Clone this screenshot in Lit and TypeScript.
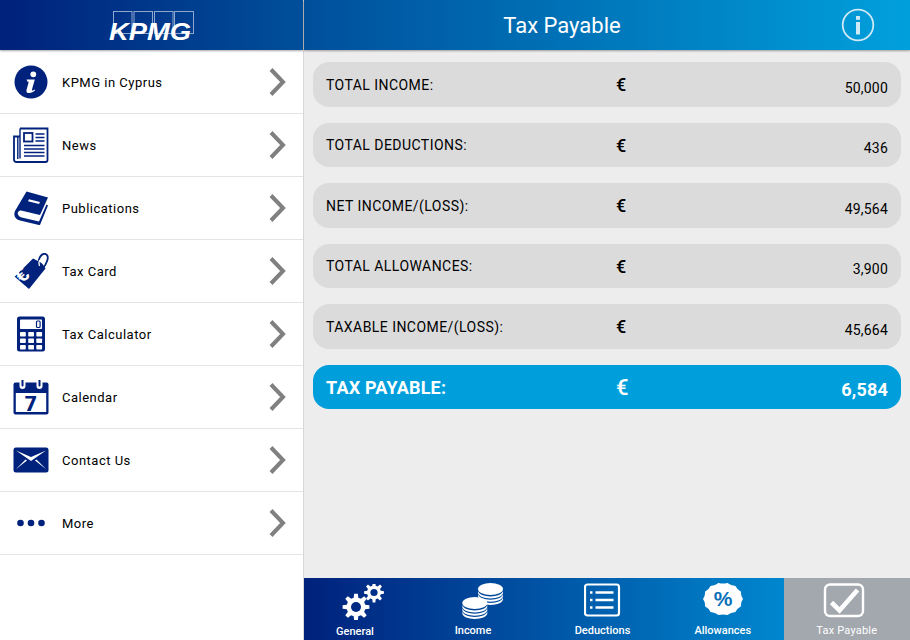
import { LitElement, css, html, svg, TemplateResult } from 'lit';
import { customElement } from 'lit/decorators.js';

const NAVY = '#00217c';

// toothed outline, used for the gears
function toothed(cx: number, cy: number, outer: number, inner: number, teeth: number, flat = 0.5): string {
  const pts: string[] = [];
  const step = (Math.PI * 2) / teeth;
  for (let i = 0; i < teeth; i++) {
    const a = i * step;
    const w = (step * flat) / 2;
    const p = [
      [inner, a - w * 1.25],
      [outer, a - w * 0.7],
      [outer, a + w * 0.7],
      [inner, a + w * 1.25],
    ];
    for (const [r, t] of p) {
      pts.push(`${(cx + r * Math.cos(t)).toFixed(2)} ${(cy + r * Math.sin(t)).toFixed(2)}`);
    }
  }
  return 'M' + pts.join('L') + 'Z';
}

// scalloped edge of the allowance badge
function scallop(cx: number, cy: number, rx: number, ry: number, bumps: number): string {
  let d = '';
  const n = bumps * 2;
  for (let i = 0; i <= n; i++) {
    const t = (i / n) * Math.PI * 2;
    const k = i % 2 === 0 ? 1 : 0.9;
    const x = (cx + rx * k * Math.cos(t)).toFixed(2);
    const y = (cy + ry * k * Math.sin(t)).toFixed(2);
    if (i === 0) d = `M${x} ${y}`;
    else if (i % 2 === 1) d += `Q${x} ${y} `;
    else d += `${x} ${y}`;
  }
  return d + 'Z';
}

const menuIcons: Record<string, TemplateResult> = {
  info: html`<svg viewBox="0 0 36 36" width="36" height="36">
    <circle cx="18" cy="18" r="16.5" fill="${NAVY}" />
    <circle cx="20.3" cy="10.3" r="2.9" fill="#fff" />
    <path d="M13.6 15.6h8.2l-2.9 10.2c-.2.8.4 1 1 .6l1.6-1 .6.9c-1.9 1.8-3.6 2.7-5.8 2.7-2.4 0-3.3-1.2-2.8-3.1l2-7.2c.2-.8-.2-1.1-1.2-1.2z" fill="#fff" />
  </svg>`,
  news: html`<svg viewBox="0 0 36 36" width="36" height="36">
    <path d="M7 1.500h27.500v31.500a2 2 0 0 1-2 2H3.500a2.500 2.500 0 0 1-2.500-2.500V9.500H7" fill="none" stroke="${NAVY}" stroke-width="1.800" />
    <path d="M4.800 9.500v22.500M7 1.500v30" stroke="${NAVY}" stroke-width="1.400" fill="none" />
    <rect x="11" y="6" width="8.500" height="8.500" fill="none" stroke="${NAVY}" stroke-width="1.800" />
    <path d="M22.500 7h9M22.500 10.500h9M22.500 14h9M11 18.500h20.500M11 22h20.500M11 25.500h20.500M11 29h20.500" stroke="${NAVY}" stroke-width="1.600" />
  </svg>`,
  book: html`<svg viewBox="0 0 36 36" width="36" height="36">
    <path d="M13.500 1.500 35 7.500 27 25 8 20.500c-2.300 0-3.800 2-3 4 .6 1.600 2 2.500 3.700 2.900L26 31.500l7.500-17 1.500 1-7.800 19c-.2.500-.6.500-1.200.4L7 30.500c-3.800-1-6-3.500-5.600-7.200.2-1.500.8-3 1.800-4.300z" fill="${NAVY}" />
    <path d="M16 9.200l11 2.800-1 2-11-2.800z" fill="#fff" />
  </svg>`,
  tag: html`<svg viewBox="0 0 36 36" width="36" height="36">
    <path d="M20 5.500 27 9 29.500 11 32.500 15.500 16 36 1.700 23.700z" fill="${NAVY}" />
    <path d="M27.500 13.500c-2.500-2-2.200-6.500-.5-9.500 1.500-2.500 4-3.800 6-2.800 2.300 1.200 2 4.300 1 7-.7 2-2.300 5-4.500 7.800" fill="none" stroke="${NAVY}" stroke-width="1.800" />
    <path d="M26.500 13c-.9-1.800-.8-3.800.1-6" fill="none" stroke="#fff" stroke-width="1.300" />
    <text x="0" y="0" transform="translate(9.500 30.500) rotate(-42)" font-family="'Liberation Sans', sans-serif" font-weight="700" font-size="20" fill="#fff">€</text>
  </svg>`,
  calc: html`<svg viewBox="0 0 36 36" width="36" height="36">
    <rect x="4" y="0.500" width="28" height="35" rx="2.500" fill="${NAVY}" />
    <rect x="7" y="3.500" width="22" height="9.500" rx="0.800" fill="#fff" />
    <rect x="23.500" y="5" width="3.600" height="6.500" rx="1" fill="none" stroke="${NAVY}" stroke-width="1.200" />
    ${[16, 22.500, 29].map((y) =>
      [7, 15.200, 23.300].map((x) => svg`<rect x="${x}" y="${y}" width="5.800" height="4.500" rx="0.800" fill="#fff" />`)
    )}
  </svg>`,
  calendar: html`<svg viewBox="0 0 36 36" width="36" height="36">
    <rect x="0.500" y="3.500" width="35" height="32" rx="2" fill="${NAVY}" />
    <rect x="2.800" y="14" width="30.400" height="19" fill="#fff" />
    <path d="M6.500 1v6a2 2 0 0 0 6 0V1M23.500 1v6a2 2 0 0 0 6 0V1" fill="#fff" />
    <path d="M8.500 1v5.500a1 1 0 0 0 2 0V1zM25.500 1v5.500a1 1 0 0 0 2 0V1z" fill="${NAVY}" />
    <text x="18" y="31.500" text-anchor="middle" font-family="Roboto, sans-serif" font-weight="900" font-size="21" fill="${NAVY}">7</text>
  </svg>`,
  mail: html`<svg viewBox="0 0 36 36" width="36" height="36">
    <rect x="0.500" y="5.500" width="35" height="25" rx="2.500" fill="${NAVY}" />
    <path d="M3 8.500 18 19 33 8.500 18 15zM2.500 27.500 12.500 17.500 14 18.500zM33.500 27.500 23.500 17.500 22 18.500z" fill="#fff" />
  </svg>`,
  more: html`<svg viewBox="0 0 36 36" width="36" height="36">
    <circle cx="7.500" cy="18" r="3.300" fill="${NAVY}" />
    <circle cx="18" cy="18" r="3.300" fill="${NAVY}" />
    <circle cx="28.500" cy="18" r="3.300" fill="${NAVY}" />
  </svg>`,
};

const coin = (cx: number, cy: number, color: string) => svg`
  <ellipse cx="${cx}" cy="${cy}" rx="12.500" ry="6" fill="#fff" />
  ${[0, 3.300, 6.600].map(
    (d) => svg`<path d="M${cx - 12.500} ${cy + 2 + d}c1 3.500 6 5.400 12.500 5.400s11.500-1.900 12.500-5.400v2c-.6 3.500-6 5.400-12.500 5.400s-11.900-1.900-12.500-5.400z" fill="#fff" />`
  )}
  <path d="M${cx - 12.500} ${cy + 1}h0" stroke="${color}" />
`;

const tabs = [
  {
    label: 'General',
    icon: html`<svg class="gears" viewBox="0 0 42 36" width="42" height="36">
      <path d="${toothed(14, 23, 13.500, 9.500, 8)}" fill="#fff" />
      <circle cx="14" cy="23" r="5" fill="#012a85" />
      <path d="${toothed(32, 8.500, 10, 7, 8)}" fill="#fff" />
      <circle cx="32" cy="8.500" r="3.600" fill="#01308a" />
    </svg>`,
  },
  {
    label: 'Income',
    icon: html`<svg class="coins" viewBox="0 0 42 36" width="42" height="36">
      ${coin(28.500, 6, '#01449a')} ${coin(12.800, 20, '#01449a')}
    </svg>`,
  },
  {
    label: 'Deductions',
    icon: html`<svg viewBox="0 0 38 36" width="38" height="36">
      <rect x="1" y="1.500" width="34" height="31" rx="2.500" fill="none" stroke="#fff" stroke-width="2.200" />
      <path d="M11.500 9.500h18M11.500 17h18M11.500 24.500h18" stroke="#fff" stroke-width="2.400" />
      <path d="M6 9.500h2.500M6 17h2.500M6 24.500h2.500" stroke="#fff" stroke-width="2.400" />
    </svg>`,
  },
  {
    label: 'Allowances',
    icon: html`<svg viewBox="0 0 40 36" width="40" height="36">
      <path d="${scallop(20, 16, 20, 16.500, 14)}" fill="#fff" />
      <text x="20" y="23" text-anchor="middle" font-family="'Liberation Sans', sans-serif" font-weight="700" font-size="21" fill="#0a70b8">%</text>
    </svg>`,
  },
  {
    label: 'Tax Payable',
    active: true,
    icon: html`<svg class="check" viewBox="0 0 42 36" width="42" height="36">
      <rect x="2" y="1.500" width="38" height="31.500" rx="5" fill="none" stroke="#fff" stroke-width="2.400" />
      <path d="M8.500 19.500l8 8L34.500 7" fill="none" stroke="#fff" stroke-width="4.600" />
    </svg>`,
  },
];

const menu = [
  ['info', 'KPMG in Cyprus'],
  ['news', 'News'],
  ['book', 'Publications'],
  ['tag', 'Tax Card'],
  ['calc', 'Tax Calculator'],
  ['calendar', 'Calendar'],
  ['mail', 'Contact Us'],
  ['more', 'More'],
];

const rows = [
  ['TOTAL INCOME:', '50,000'],
  ['TOTAL DEDUCTIONS:', '436'],
  ['NET INCOME/(LOSS):', '49,564'],
  ['TOTAL ALLOWANCES:', '3,900'],
  ['TAXABLE INCOME/(LOSS):', '45,664'],
];

@customElement('app-root')
export class AppRoot extends LitElement {
  static override styles = css`
    :host {
      display: block;
      width: 910px;
      height: 640px;
      overflow: hidden;
      font-family: Roboto, 'Liberation Sans', sans-serif;
    }
    .page {
      display: flex;
      height: 640px;
    }
    .side {
      width: 303px;
      flex: none;
      background: #fff;
      border-right: 1px solid #d8d8d8;
    }
    .brand {
      height: 50px;
      display: flex;
      justify-content: center;
      background: linear-gradient(90deg, #00217c, #004f9b);
      box-shadow: 0 1px 2px rgba(0, 0, 0, 0.35);
      position: relative;
    }
    .logo {
      position: relative;
      width: 86px;
      height: 50px;
    }
    .boxes {
      position: absolute;
      left: 4px;
      top: 11px;
    }
    .logo span {
      position: absolute;
      left: 0;
      top: 20px;
      font: italic 700 23px/24px 'Liberation Sans', sans-serif;
      color: #fff;
      transform-origin: left top;
      transform: scaleX(1.19);
    }
    .menu {
      padding-top: 1px;
    }
    .menu-row {
      height: 62px;
      border-bottom: 1px solid #e4e4e4;
      display: flex;
      align-items: center;
      padding: 0 17px 0 13px;
      color: #000;
      font-size: 13px;
      font-weight: 400;
      letter-spacing: 0.5px;
    }
    .menu-row .icon {
      width: 36px;
      height: 36px;
      flex: none;
      margin-right: 13px;
    }
    .menu-row .name {
      flex: 1;
    }
    .main {
      flex: 1;
      display: flex;
      flex-direction: column;
      background: #ededed;
    }
    .top {
      height: 50px;
      flex: none;
      display: flex;
      align-items: center;
      justify-content: center;
      color: #fff;
      font-size: 22px;
      background: linear-gradient(90deg, #004f9b, #00a0dc);
      box-shadow: 0 1px 2px rgba(0, 0, 0, 0.35);
      position: relative;
      padding-right: 90px;
      box-sizing: border-box;
    }
    .top svg {
      position: absolute;
      right: 35px;
      top: 8px;
    }
    .list {
      flex: 1;
      display: flex;
      flex-direction: column;
      gap: 16px;
      padding: 12px 9px 0 9px;
    }
    .pill {
      height: 44.500px;
      flex: none;
      border-radius: 16px;
      background: #dbdbdb;
      display: grid;
      grid-template-columns: 290px 40px 1fr;
      padding: 0 13px;
      color: #000;
      font-size: 14px;
      font-weight: 400;
      letter-spacing: 0.45px;
      box-sizing: border-box;
    }
    .pill .label {
      align-self: center;
      margin-top: 1px;
    }
    .pill .euro {
      align-self: center;
      font-size: 18px;
      font-weight: 500;
      margin-top: 1px;
    }
    .pill .value {
      align-self: center;
      text-align: right;
      font-weight: 400;
      letter-spacing: 0.2px;
      margin-top: 7px;
    }
    .pill.total {
      background: #009fdc;
      color: #fff;
      font-size: 18px;
      font-weight: 700;
      letter-spacing: 0.2px;
    }
    .pill.total .euro {
      font-size: 22px;
      font-weight: 500;
    }
    .pill.total .value {
      font-weight: 700;
      margin-top: 5px;
    }
    .tabs {
      height: 62px;
      flex: none;
      display: grid;
      grid-template-columns: 102px 134px 125px 118.500px 1fr;
      background: linear-gradient(90deg, #00217c, #0088cf 80%, #0088cf);
      color: #fff;
    }
    .tab {
      display: flex;
      flex-direction: column;
      align-items: center;
      font-size: 11px;
      font-weight: 500;
      padding-top: 5px;
      box-sizing: border-box;
    }
    .tab:nth-child(4) {
      padding-right: 3px;
    }
    .tab svg {
      height: 36px;
      flex: none;
    }
    .tab .gears {
      margin: 1px 0 0 16px;
    }
    .tab .coins {
      margin-left: 19px;
    }
    .tab .check {
      margin-right: 6px;
    }
    .tab .text {
      margin-top: 5px;
    }
    .tab.active {
      background: #a3a8ae;
      letter-spacing: 0.2px;
      font-weight: 400;
    }
  `;

  override render(): TemplateResult {
    return html`
      <div class="page">
        <aside class="side">
          <header class="brand">
            <div class="logo">
              <svg class="boxes" width="82" height="24" viewBox="0 0 82 24">
                ${[0, 20.500, 41, 61].map(
                  (x) => svg`<rect x="${x + 0.500}" y="0.500" width="${x === 61 ? 19 : 18.500}" height="22" fill="none" stroke="#8fa6cf" stroke-width="1" />`
                )}
              </svg>
              <span>KPMG</span>
            </div>
          </header>
          <div class="menu">
            ${menu.map(
              ([icon, name]) => html`
                <div class="menu-row">
                  <div class="icon">${menuIcons[icon]}</div>
                  <div class="name">${name}</div>
                  <svg width="18" height="30" viewBox="0 0 18 30">
                    <path d="M3 2.500 15 15 3 27.500" fill="none" stroke="#808080" stroke-width="4" />
                  </svg>
                </div>
              `
            )}
          </div>
        </aside>
        <main class="main">
          <header class="top">
            Tax Payable
            <svg width="34" height="34" viewBox="0 0 34 34">
              <circle cx="17" cy="17" r="15.300" fill="none" stroke="#cfe9f6" stroke-width="1.800" />
              <rect x="15" y="14" width="4" height="12.500" fill="#cfe9f6" />
              <rect x="15" y="8" width="4" height="3.800" fill="#cfe9f6" />
            </svg>
          </header>
          <section class="list">
            ${rows.map(
              ([label, value]) => html`
                <div class="pill">
                  <div class="label">${label}</div>
                  <div class="euro">€</div>
                  <div class="value">${value}</div>
                </div>
              `
            )}
            <div class="pill total">
              <div class="label">TAX PAYABLE:</div>
              <div class="euro">€</div>
              <div class="value">6,584</div>
            </div>
          </section>
          <nav class="tabs">
            ${tabs.map(
              (t) => html`
                <div class="tab ${t.active ? 'active' : ''}">${t.icon}<div class="text">${t.label}</div></div>
              `
            )}
          </nav>
        </main>
      </div>
    `;
  }
}
